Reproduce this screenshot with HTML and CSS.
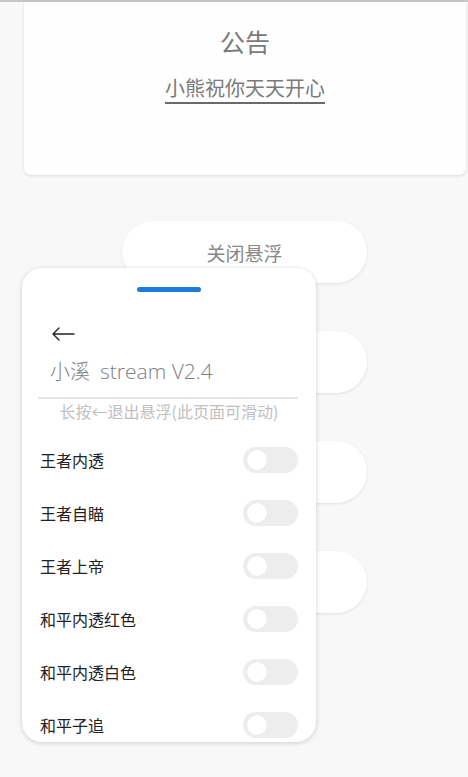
FILE: index.html
```html
<!DOCTYPE html>
<html lang="zh-CN">
<head>
<meta charset="utf-8">
<title>小溪 stream</title>
<link rel="stylesheet" href="styles.css">
</head>
<body>
<div class="page">
  <div class="notice">
    <div class="notice-title">公告</div>
    <div class="notice-text">小熊祝你天天开心</div>
  </div>
  <div class="pills">
    <div class="pill">关闭悬浮</div>
    <div class="pill"></div>
    <div class="pill"></div>
    <div class="pill"></div>
  </div>

  <div class="panel">
    <div class="handle"></div>
    <div class="back">
      <svg width="24" height="14" viewBox="0 0 24 14"><path d="M23 7H2M8 1L2 7l6 6" fill="none" stroke="#222" stroke-width="1.4" stroke-linecap="round" stroke-linejoin="round"/></svg>
    </div>
    <div class="title"><span class="title-cn">小溪</span>stream V2.4</div>
    <div class="divider"></div>
    <div class="hint">长按←退出悬浮(此页面可滑动)</div>
    <div class="list">
      <div class="row"><span class="label">王者内透</span><span class="switch"><span class="knob"></span></span></div>
      <div class="row"><span class="label">王者自瞄</span><span class="switch"><span class="knob"></span></span></div>
      <div class="row"><span class="label">王者上帝</span><span class="switch"><span class="knob"></span></span></div>
      <div class="row"><span class="label">和平内透红色</span><span class="switch"><span class="knob"></span></span></div>
      <div class="row"><span class="label">和平内透白色</span><span class="switch"><span class="knob"></span></span></div>
      <div class="row"><span class="label">和平子追</span><span class="switch"><span class="knob"></span></span></div>
    </div>
  </div>
</div>
</body>
</html>
```
FILE: styles.css
```css
* { box-sizing: border-box; }
html, body { margin: 0; padding: 0; }
body {
  background: #f8f8f8;
  font-family: "Noto Sans CJK SC", "Noto Sans", sans-serif;
  width: 468px;
  height: 777px;
  overflow: hidden;
}
.page {
  position: relative;
  height: 777px;
  border-top: 2px solid #c6c6c6;
}
.notice {
  margin-left: 24px;
  width: 442px;
  height: 173px;
  background: #fefefe;
  border-radius: 0 0 7px 7px;
  box-shadow: 0 1px 3px rgba(0,0,0,0.13);
  display: flex;
  flex-direction: column;
  align-items: center;
  padding-top: 22px;
}
.notice-title {
  font-size: 25px;
  line-height: 35px;
  color: #7a7a7a;
}
.notice-text {
  margin-top: 15px;
  font-size: 20px;
  line-height: 28px;
  color: #7a7a7a;
  border-bottom: 2px solid #6a6a6a;
}
.pills {
  margin-top: 46px;
  margin-left: 122px;
  display: flex;
  flex-direction: column;
  gap: 48px;
}
.pill {
  width: 245px;
  height: 62px;
  background: #fff;
  border-radius: 31px;
  box-shadow: 0 1px 3px rgba(0,0,0,0.1);
  display: flex;
  align-items: center;
  justify-content: center;
  font-size: 19px;
  color: #888;
}
.panel {
  position: absolute;
  left: 22px;
  top: 266px;
  width: 294px;
  height: 474px;
  background: #fff;
  border-radius: 20px;
  box-shadow: 0 1px 5px rgba(0,0,0,0.18);
  overflow: hidden;
  display: flex;
  flex-direction: column;
}
.panel > * { flex-shrink: 0; }
.handle {
  align-self: center;
  margin-top: 19px;
  width: 64px;
  height: 5px;
  border-radius: 3px;
  background: #1f7bdb;
}
.back {
  margin-top: 35px;
  margin-left: 29px;
  height: 14px;
  display: flex;
}
.title {
  margin-top: 16px;
  margin-left: 28px;
  font-family: "Open Sans", "Noto Sans CJK SC", sans-serif;
  font-weight: 300;
  font-size: 21px;
  line-height: 28px;
  color: #7e7e7e;
}
.title-cn {
  font-family: "Noto Sans CJK SC", sans-serif;
  font-size: 20px;
  margin-right: 10px;
}
.divider {
  margin: 12px 18px 0 16px;
  height: 2px;
  background: #e4e4e4;
}
.hint {
  margin-top: 2px;
  text-align: center;
  font-size: 16px;
  line-height: 20px;
  color: #c0c0c0;
}
.list {
  margin-top: 12px;
  display: flex;
  flex-direction: column;
}
.row {
  height: 53px;
  flex-shrink: 0;
  display: flex;
  align-items: center;
  justify-content: space-between;
  padding: 0 18px 0 18px;
}
.label {
  font-size: 16px;
  color: #222;
}
.switch {
  width: 55px;
  height: 26px;
  border-radius: 13px;
  background: #ededed;
  display: flex;
  align-items: center;
  padding-left: 4px;
}
.knob {
  width: 20px;
  height: 20px;
  border-radius: 50%;
  background: #fff;
  box-shadow: 0 0 1px rgba(0,0,0,0.08);
}
```
